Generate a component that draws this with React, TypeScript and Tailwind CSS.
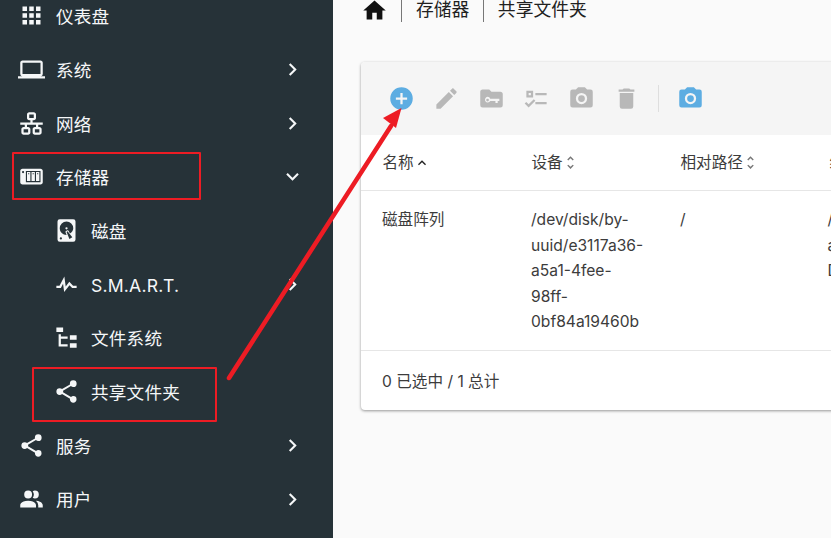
const P = {
  apps: "M16,20H20V16H16M16,14H20V10H16M10,8H14V4H10M16,8H20V4H16M10,14H14V10H10M4,14H8V10H4M4,20H8V16H4M10,20H14V16H10M4,8H8V4H4V8Z",
  laptop: "M4,6H20V16H4M20,18A2,2 0 0,0 22,16V6C22,4.89 21.1,4 20,4H4C2.89,4 2,4.89 2,6V16A2,2 0 0,0 4,18H0V20H24V18H20Z",
  lan: "M10,2C8.89,2 8,2.89 8,4V7C8,8.11 8.89,9 10,9H11V11H2V13H6V15H5C3.89,15 3,15.89 3,17V20C3,21.11 3.89,22 5,22H9C10.11,22 11,21.11 11,20V17C11,15.89 10.11,15 9,15H8V13H16V15H15C13.89,15 13,15.89 13,17V20C13,21.11 13.89,22 15,22H19C20.11,22 21,21.11 21,20V17C21,15.89 20.11,15 19,15H18V13H22V11H13V9H14C15.11,9 16,8.11 16,7V4C16,2.89 15.11,2 14,2H10M10,4H14V7H10V4M5,17H9V20H5V17M15,17H19V20H15V17Z",
  nas: "M4,5C2.89,5 2,5.89 2,7V17C2,18.11 2.89,19 4,19H20C21.11,19 22,18.11 22,17V7C22,5.89 21.11,5 20,5H4M4.5,7A1,1 0 0,1 5.5,8A1,1 0 0,1 4.5,9A1,1 0 0,1 3.5,8A1,1 0 0,1 4.5,7M7,7H20V17H7V7M8,8V16H11V8H8M12,8V16H15V8H12M16,8V16H19V8H16M9,9H10V10H9V9M13,9H14V10H13V9M17,9H18V10H17V9Z",
  disk: "M6,2H18A2,2 0 0,1 20,4V20A2,2 0 0,1 18,22H6A2,2 0 0,1 4,20V4A2,2 0 0,1 6,2M12,4A6,6 0 0,0 6,10C6,13.31 8.69,16 12.1,16L11.22,13.77C10.95,13.29 11.09,12.68 11.56,12.4L12.43,11.9C12.9,11.63 13.5,11.79 13.8,12.26L15.07,14.74C16.88,13.69 18,11.95 18,10A6,6 0 0,0 12,4M12,9A1,1 0 0,1 13,10A1,1 0 0,1 12,11A1,1 0 0,1 11,10A1,1 0 0,1 12,9M7,18A1,1 0 0,0 6,19A1,1 0 0,0 7,20A1,1 0 0,0 8,19A1,1 0 0,0 7,18M12.09,13.27L14.58,19.58L17.17,18.08L12.95,12.77L12.09,13.27Z",
  pulse: "M3,13H5.79L10.1,4.79L11.28,13.75L14.5,9.66L17.83,13H21V15H17L14.67,12.67L9.92,18.73L8.94,11.31L7,15H3V13Z",
  tree: "M3,3H9V7H3V3M15,10H21V14H15V10M15,17H21V21H15V17M13,13H7V18H13V20H7L5,20V9H7V11H13V13Z",
  share: "M18,16.08C17.24,16.08 16.56,16.38 16.04,16.85L8.91,12.7C8.96,12.47 9,12.24 9,12C9,11.76 8.96,11.53 8.91,11.3L15.96,7.19C16.5,7.69 17.21,8 18,8A3,3 0 0,0 21,5A3,3 0 0,0 18,2A3,3 0 0,0 15,5C15,5.24 15.04,5.47 15.09,5.7L8.04,9.81C7.5,9.31 6.79,9 6,9A3,3 0 0,0 3,12A3,3 0 0,0 6,15C6.79,15 7.5,14.69 8.04,14.19L15.16,18.34C15.11,18.55 15.08,18.77 15.08,19C15.08,20.61 16.39,21.91 18,21.91C19.61,21.91 20.92,20.61 20.92,19A2.92,2.92 0 0,0 18,16.08Z",
  users: "M16 17V19H2V17S2 13 9 13 16 17 16 17M12.5 7.5A3.5 3.5 0 1 0 9 11A3.5 3.5 0 0 0 12.5 7.5M15.94 13A5.32 5.32 0 0 1 18 17V19H22V17S22 13.37 15.94 13M15 4A3.39 3.39 0 0 0 13.07 4.59A5 5 0 0 1 13.07 10.41A3.39 3.39 0 0 0 15 11A3.5 3.5 0 0 0 15 4Z",
  right: "M8.59,16.58L13.17,12L8.59,7.41L10,6L16,12L10,18L8.59,16.58Z",
  down: "M7.41,8.58L12,13.17L16.59,8.58L18,10L12,16L6,10L7.41,8.58Z",
  home: "M10,20V14H14V20H19V12H22L12,3L2,12H5V20H10Z",
  plus: "M17,13H13V17H11V13H7V11H11V7H13V11H17M12,2A10,10 0 0,0 2,12A10,10 0 0,0 12,22A10,10 0 0,0 22,12A10,10 0 0,0 12,2Z",
  pencil: "M20.71,7.04C21.1,6.65 21.1,6 20.71,5.63L18.37,3.29C18,2.9 17.35,2.9 16.96,3.29L15.12,5.12L18.87,8.87M3,17.25V21H6.75L17.81,9.93L14.06,6.18L3,17.25Z",
  folderKey: "M10,4H4C2.89,4 2,4.89 2,6V18A2,2 0 0,0 4,20H20A2,2 0 0,0 22,18V8C22,6.89 21.1,6 20,6H12L10,4ZM8.5,10.5A2.5,2.5 0 0,1 10.9,12.2H19V14.2H17.5V16H15.5V14.2H10.9A2.5,2.5 0 1,1 8.5,10.5ZM8.5,12.2A1.2,1.2 0 1,0 8.5,14.6A1.2,1.2 0 1,0 8.5,12.2Z",
  checks: "M3 5H9V11H3V5M5 7V9H7V7H5M11 7H21V9H11V7M11 15H21V17H11V15M5 20L1.5 16.5L2.91 15.09L5 17.17L9.59 12.59L11 14L5 20Z",
  camera: "M4,4H7L9,2H15L17,4H20A2,2 0 0,1 22,6V18A2,2 0 0,1 20,20H4A2,2 0 0,1 2,18V6A2,2 0 0,1 4,4M12,7A5,5 0 0,0 7,12A5,5 0 0,0 12,17A5,5 0 0,0 17,12A5,5 0 0,0 12,7M12,9A3,3 0 0,1 15,12A3,3 0 0,1 12,15A3,3 0 0,1 9,12A3,3 0 0,1 12,9Z",
  trash: "M19,4H15.5L14.5,3H9.5L8.5,4H5V6H19M6,19A2,2 0 0,0 8,21H16A2,2 0 0,0 18,19V7H6V19Z",
  sortUp: "M7.41,15.41L12,10.83L16.59,15.41L18,14L12,8L6,14L7.41,15.41Z",
  unfold: "M12,18.17L8.83,15L7.42,16.41L12,21L16.59,16.41L15.17,15M12,5.83L15.17,9L16.58,7.59L12,3L7.41,7.59L8.83,9L12,5.83Z",
};

function Icon({ d, className }: { d: string; className: string }) {
  return (
    <svg viewBox="0 0 24 24" className={className} fill="currentColor" fillRule="evenodd">
      <path d={d} />
    </svg>
  );
}

function NavRow({ icon, label, sub, chevron }: { icon: string; label: string; sub?: boolean; chevron?: string }) {
  return (
    <div className={`flex h-[53.7px] items-center pr-[28px] ${sub ? "pl-[52.5px]" : "pl-[17.5px]"}`}>
      <Icon d={icon} className="h-[27px] w-[27px] shrink-0" />
      <span className="ml-[11.5px] flex-1 pt-[3px] text-[17.6px] tracking-[0.2px]">{label}</span>
      {chevron && <Icon d={chevron} className="h-[25px] w-[25px] shrink-0" />}
    </div>
  );
}

function Th({ label, sorted }: { label: string; sorted?: boolean }) {
  return (
    <div className="flex w-[149px] shrink-0 items-center pl-[22px]">
      <span>{label}</span>
      {sorted ? (
        <Icon d={P.sortUp} className="h-[16px] w-[16px] text-[#222]" />
      ) : (
        <Icon d={P.unfold} className="-ml-[0.5px] h-[17px] w-[17px] text-[#777]" />
      )}
    </div>
  );
}

export default function App() {
  return (
    <div className="relative flex h-[538px] w-[831px] overflow-hidden bg-[#fafafa] font-['Inter','Noto_Sans_CJK_SC',sans-serif]">
      <nav className="-mt-[11px] w-[333px] shrink-0 bg-[#263238] text-[#f5f7f8]">
        <NavRow icon={P.apps} label="仪表盘" />
        <NavRow icon={P.laptop} label="系统" chevron={P.right} />
        <NavRow icon={P.lan} label="网络" chevron={P.right} />
        <NavRow icon={P.nas} label="存储器" chevron={P.down} />
        <NavRow sub icon={P.disk} label="磁盘" />
        <NavRow sub icon={P.pulse} label="S.M.A.R.T." chevron={P.right} />
        <NavRow sub icon={P.tree} label="文件系统" />
        <NavRow sub icon={P.share} label="共享文件夹" />
        <NavRow icon={P.share} label="服务" chevron={P.right} />
        <NavRow icon={P.users} label="用户" chevron={P.right} />
      </nav>

      <main className="min-w-0 flex-1 pl-[27.5px]">
        <div className="-mt-[2px] flex h-[24px] items-center text-[17.8px] text-[#212121]">
          <Icon d={P.home} className="h-[27px] w-[27px] text-[#111]" />
          <span className="ml-[13.5px] flex h-[24px] items-center border-l border-[#777] pl-[14px]">存储器</span>
          <span className="ml-[13.5px] flex h-[24px] items-center border-l border-[#777] pl-[14px]">共享文件夹</span>
        </div>

        <section className="mt-[40px] w-[600px] rounded-[4px] bg-white text-[15.6px] text-[#3c3c3c] shadow-[0_1px_3px_rgba(0,0,0,0.4)]">
          <div className="flex h-[73px] items-center gap-[18px] rounded-t-[4px] bg-[#f5f5f5] pl-[27px] text-[#b8b8b8]">
            <Icon d={P.plus} className="h-[27px] w-[27px] text-[#5dade2]" />
            <Icon d={P.pencil} className="h-[27px] w-[27px]" />
            <Icon d={P.folderKey} className="h-[27px] w-[27px]" />
            <Icon d={P.checks} className="h-[27px] w-[27px]" />
            <Icon d={P.camera} className="h-[27px] w-[27px]" />
            <Icon d={P.trash} className="h-[27px] w-[27px]" />
            <div className="h-[27px] w-px bg-[#dedede]" />
            <Icon d={P.camera} className="h-[27px] w-[27px] text-[#5dade2]" />
          </div>

          <div className="flex h-[56px] items-center border-b border-[#e6e6e6] pt-[1px]">
            <Th label="名称" sorted />
            <Th label="设备" />
            <Th label="相对路径" />
            <Th label="绝对路径" />
          </div>

          <div className="flex h-[160px] border-b border-[#e6e6e6] pt-[16px] leading-[25.5px]">
            <div className="w-[149px] shrink-0 pl-[21.5px]">磁盘阵列</div>
            <div className="w-[149px] shrink-0 pl-[21.5px]">
              /dev/disk/by-<br />uuid/e3117a36-<br />a5a1-4fee-<br />98ff-<br />0bf84a19460b
            </div>
            <div className="w-[149px] shrink-0 pl-[21.5px]">/</div>
            <div className="w-[149px] shrink-0 pl-[20px]">/<br />a<br />D</div>
          </div>

          <div className="flex h-[59px] items-center pl-[21.5px] pt-[3px]">0 已选中 / 1 总计</div>
        </section>
      </main>

      <div className="absolute left-[12px] top-[152px] h-[48px] w-[189px] rounded-[1px] border-[2.5px] border-[#ed1c24]" />
      <div className="absolute left-[32px] top-[367px] h-[55px] w-[185px] rounded-[1px] border-[2.5px] border-[#ed1c24]" />
      <svg className="absolute left-0 top-0 h-[538px] w-[831px]" viewBox="0 0 831 538" fill="none">
        <path d="M229 378L391 126" stroke="#ed1c24" strokeWidth="4.5" strokeLinecap="round" />
        <path d="M401.5 108L383 118L396 128Z" fill="#ed1c24" />
      </svg>
    </div>
  );
}
